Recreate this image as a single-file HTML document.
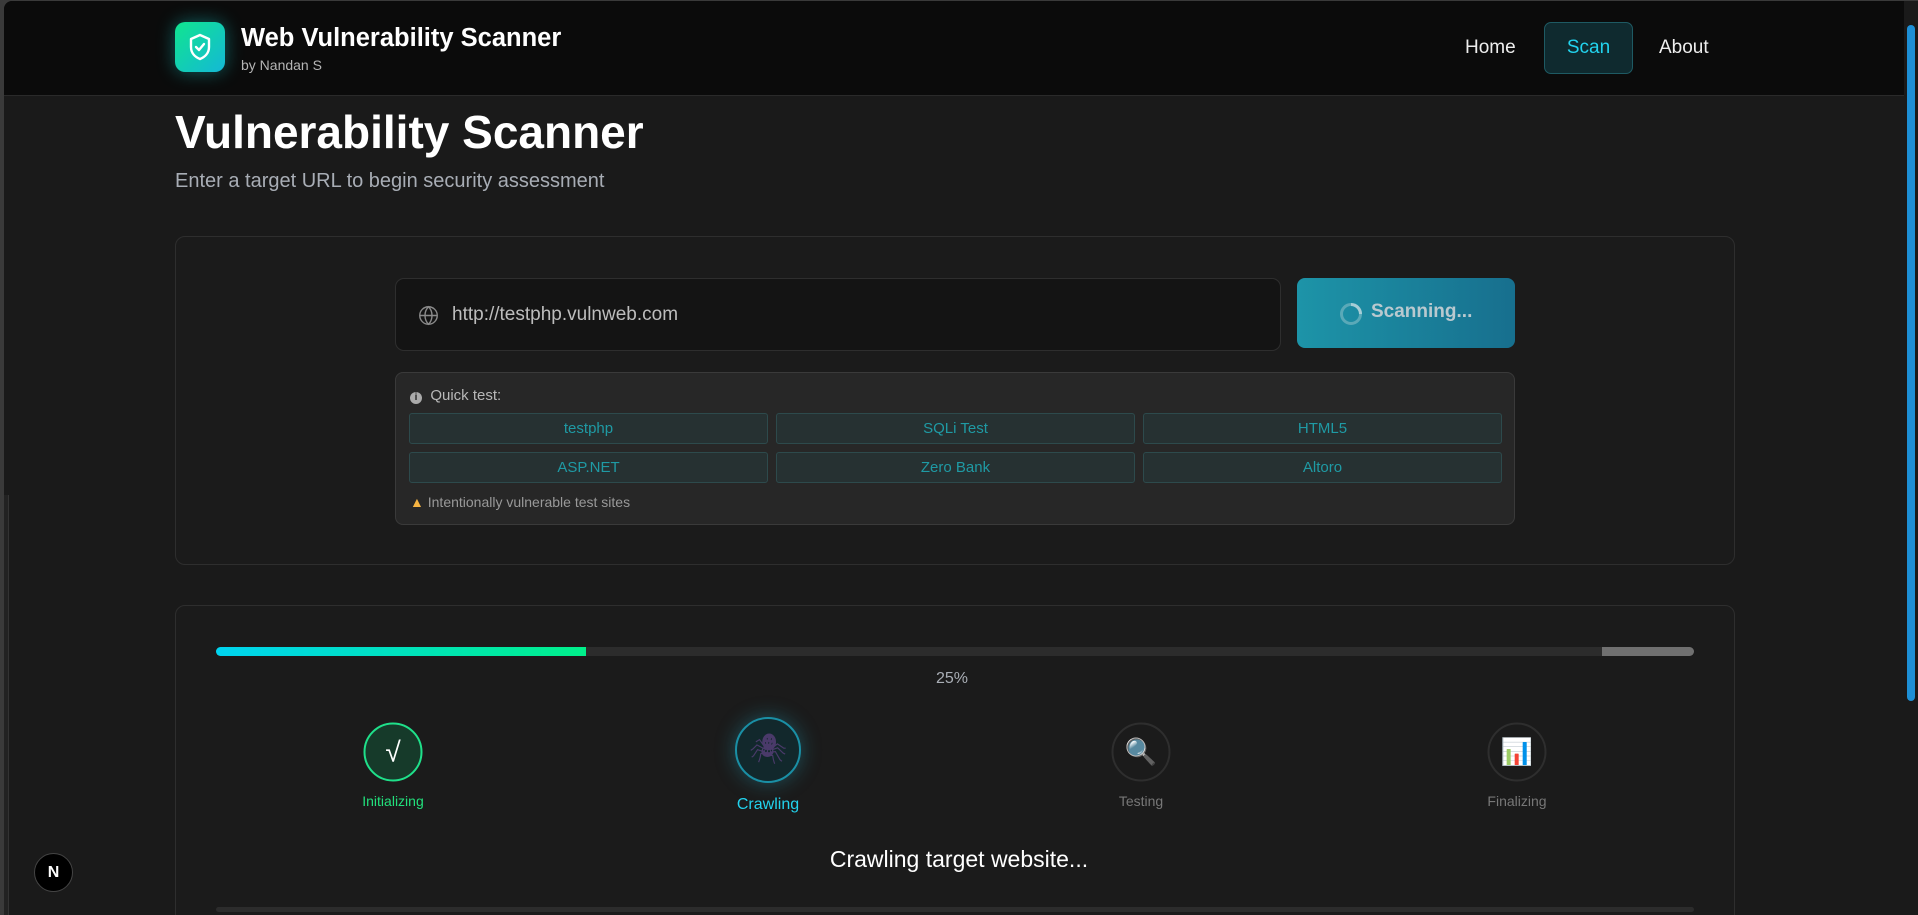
<!DOCTYPE html>
<html><head><meta charset="utf-8"><style>
*{box-sizing:border-box;margin:0;padding:0}
body{width:1918px;height:915px;overflow:hidden;background:#3a3a3a;font-family:"Liberation Sans",sans-serif;color:#fff;position:relative}
.win{position:absolute;left:4px;top:1px;width:1914px;height:914px;background:#1a1a1a;border-top-left-radius:8px;overflow:hidden}
.hdr{position:absolute;left:0;top:0;right:0;height:95px;background:#0b0b0b;border-bottom:1px solid #2a2a2a}
.logo{position:absolute;left:171px;top:21px;width:50px;height:50px;border-radius:10px;background:linear-gradient(135deg,#10e58f,#14b8d6);box-shadow:0 0 18px rgba(20,200,200,.45)}
.t1{position:absolute;left:237px;top:23px;font-size:25.5px;font-weight:bold}
.t2{position:absolute;left:237px;top:56px;font-size:14px;color:#b5b5b5}
.nav{position:absolute;top:36px;font-size:19px;color:#eee}
.scan{position:absolute;left:1540px;top:21px;width:89px;height:52px;border:1px solid #1e5a63;background:#0f2a2f;border-radius:7px;color:#22d3ee;font-size:19px;text-align:center;line-height:50px}
h1{position:absolute;left:171px;top:104px;font-size:46px;font-weight:bold}
.sub{position:absolute;left:171px;top:169px;font-size:20px;color:#a8adb5}
.card{position:absolute;left:171px;width:1560px;border:1px solid #2e2e2e;border-radius:10px;background:#1b1b1b}
.inp{position:absolute;left:391px;top:277px;width:886px;height:73px;border:1px solid #2e2e2e;border-radius:9px;background:#141414}
.inp span{position:absolute;left:56px;top:25px;font-size:19px;color:#bdbdbd}
.btn{position:absolute;left:1293px;top:277px;width:218px;height:70px;border-radius:8px;background:linear-gradient(90deg,#1d94a8,#176f8e);color:#b9c9cf;font-weight:bold;font-size:19px}
.qt{position:absolute;left:391px;top:371px;width:1120px;height:153px;border:1px solid #3a3a3a;border-radius:8px;background:#272727}
.q{position:absolute;height:31px;width:359px;border:1px solid #2d4a4c;border-radius:3px;background:#263132;color:#1f9aa4;font-size:15px;text-align:center;line-height:29px}
.step{position:absolute;border-radius:50%;transform:translate(-50%,-50%)}
.lbl{position:absolute;transform:translateX(-50%);font-size:15px;white-space:nowrap}
</style></head><body>
<div class="win">
<div class="hdr">
 <div class="logo"><svg width="50" height="50" viewBox="0 0 50 50"><path d="M25 13 L34 17 V25 C34 31 30 35 25 37 C20 35 16 31 16 25 V17 Z" fill="none" stroke="#fff" stroke-width="2.4" stroke-linejoin="round"/><path d="M21 25 l3 3 l5 -6" fill="none" stroke="#fff" stroke-width="2.4" stroke-linecap="round" stroke-linejoin="round"/></svg></div>
 <div class="t1">Web Vulnerability Scanner</div>
 <div class="t2">by Nandan S</div>
 <div class="nav" style="left:1461px">Home</div>
 <div class="scan">Scan</div>
 <div class="nav" style="left:1655px">About</div>
</div>
<h1>Vulnerability Scanner</h1>
<div class="sub">Enter a target URL to begin security assessment</div>
<div class="card" style="top:235px;height:329px"></div>
<div class="inp"><svg style="position:absolute;left:22px;top:26px" width="21" height="21" viewBox="0 0 24 24" fill="none" stroke="#8a8a8a" stroke-width="1.6"><circle cx="12" cy="12" r="10"/><path d="M2 12h20M12 2c3 3 4 6 4 10s-1 7-4 10c-3-3-4-6-4-10s1-7 4-10z"/></svg><span>http://testphp.vulnweb.com</span></div>
<div class="btn"><svg style="position:absolute;left:42px;top:24px" width="24" height="24" viewBox="0 0 24 24"><circle cx="12" cy="12" r="9.5" fill="none" stroke="#5aa9b8" stroke-width="3"/><path d="M12 2.5 A9.5 9.5 0 0 1 21.5 12" fill="none" stroke="#a7cdd6" stroke-width="3"/></svg><span style="position:absolute;left:74px;top:23px">Scanning...</span></div>
<div class="qt">
 <div style="position:absolute;left:14px;top:14px;font-size:15px;color:#b8b8b8"><span style="display:inline-block;width:12px;height:12px;border-radius:50%;background:#aaa;color:#272727;font-size:10px;text-align:center;line-height:12px;font-weight:bold;vertical-align:0">i</span>&nbsp; Quick test:</div>
 <div class="q" style="left:13px;top:40px">testphp</div>
 <div class="q" style="left:380px;top:40px">SQLi Test</div>
 <div class="q" style="left:747px;top:40px">HTML5</div>
 <div class="q" style="left:13px;top:79px">ASP.NET</div>
 <div class="q" style="left:380px;top:79px">Zero Bank</div>
 <div class="q" style="left:747px;top:79px">Altoro</div>
 <div style="position:absolute;left:14px;top:121px;font-size:14px;color:#999"><span style="color:#f5b342">▲</span> Intentionally vulnerable test sites</div>
</div>
<div class="card" style="top:604px;height:340px"></div>
<div style="position:absolute;left:212px;top:646px;width:1478px;height:9px;border-radius:5px;background:#2c2c2c;overflow:hidden"><div style="width:370px;height:9px;background:linear-gradient(90deg,#00d4f0,#00f08a)"></div><div style="position:absolute;right:0;top:0;width:92px;height:9px;background:#707070"></div></div>
<div style="position:absolute;left:932px;top:669px;font-size:16px;color:#a9aeb5">25%</div>
<div class="step" style="left:389px;top:751px;width:59px;height:59px;border:2px solid #1fe08a;background:#163a2a;color:#fff;font-size:28px;text-align:center;line-height:55px">√</div>
<div class="lbl" style="left:389px;top:792px;color:#22e07c;font-size:14px">Initializing</div>
<div class="step" style="left:764px;top:749px;width:66px;height:66px;border:2px solid #1a8fa5;background:#12282c;box-shadow:0 0 20px rgba(34,180,210,.35);text-align:center;line-height:62px;font-size:30px;color:#4a3a6a">🕷</div>
<div class="lbl" style="left:764px;top:795px;color:#22d3ee;font-size:16px">Crawling</div>
<div class="step" style="left:1137px;top:751px;width:59px;height:59px;border:2px solid #2e2e2e;text-align:center;line-height:55px;font-size:26px">🔍</div>
<div class="lbl" style="left:1137px;top:792px;color:#777;font-size:14px">Testing</div>
<div class="step" style="left:1513px;top:751px;width:59px;height:59px;border:2px solid #2e2e2e;text-align:center;line-height:55px;font-size:26px">📊</div>
<div class="lbl" style="left:1513px;top:792px;color:#777;font-size:14px">Finalizing</div>
<div style="position:absolute;left:0;width:1910px;text-align:center;top:845px;font-size:23px;color:#fff">Crawling target website...</div>
<div style="position:absolute;left:212px;top:906px;width:1478px;height:5px;border-radius:3px;background:#2c2c2c"></div>
<div style="position:absolute;left:0;top:494px;width:5px;height:420px;background:#222;border-right:1px solid #333"></div>
<div style="position:absolute;left:30px;top:852px;width:39px;height:39px;border-radius:50%;background:#000;border:1px solid #444;text-align:center;line-height:37px;font-size:16px;font-weight:bold">N</div>
<div style="position:absolute;right:0;top:0;width:14px;height:914px;background:#1a1a1a"><div style="position:absolute;left:3px;top:24px;width:8px;height:676px;border-radius:4px;background:#1d8fd6"></div></div>
</div>
</body></html>
